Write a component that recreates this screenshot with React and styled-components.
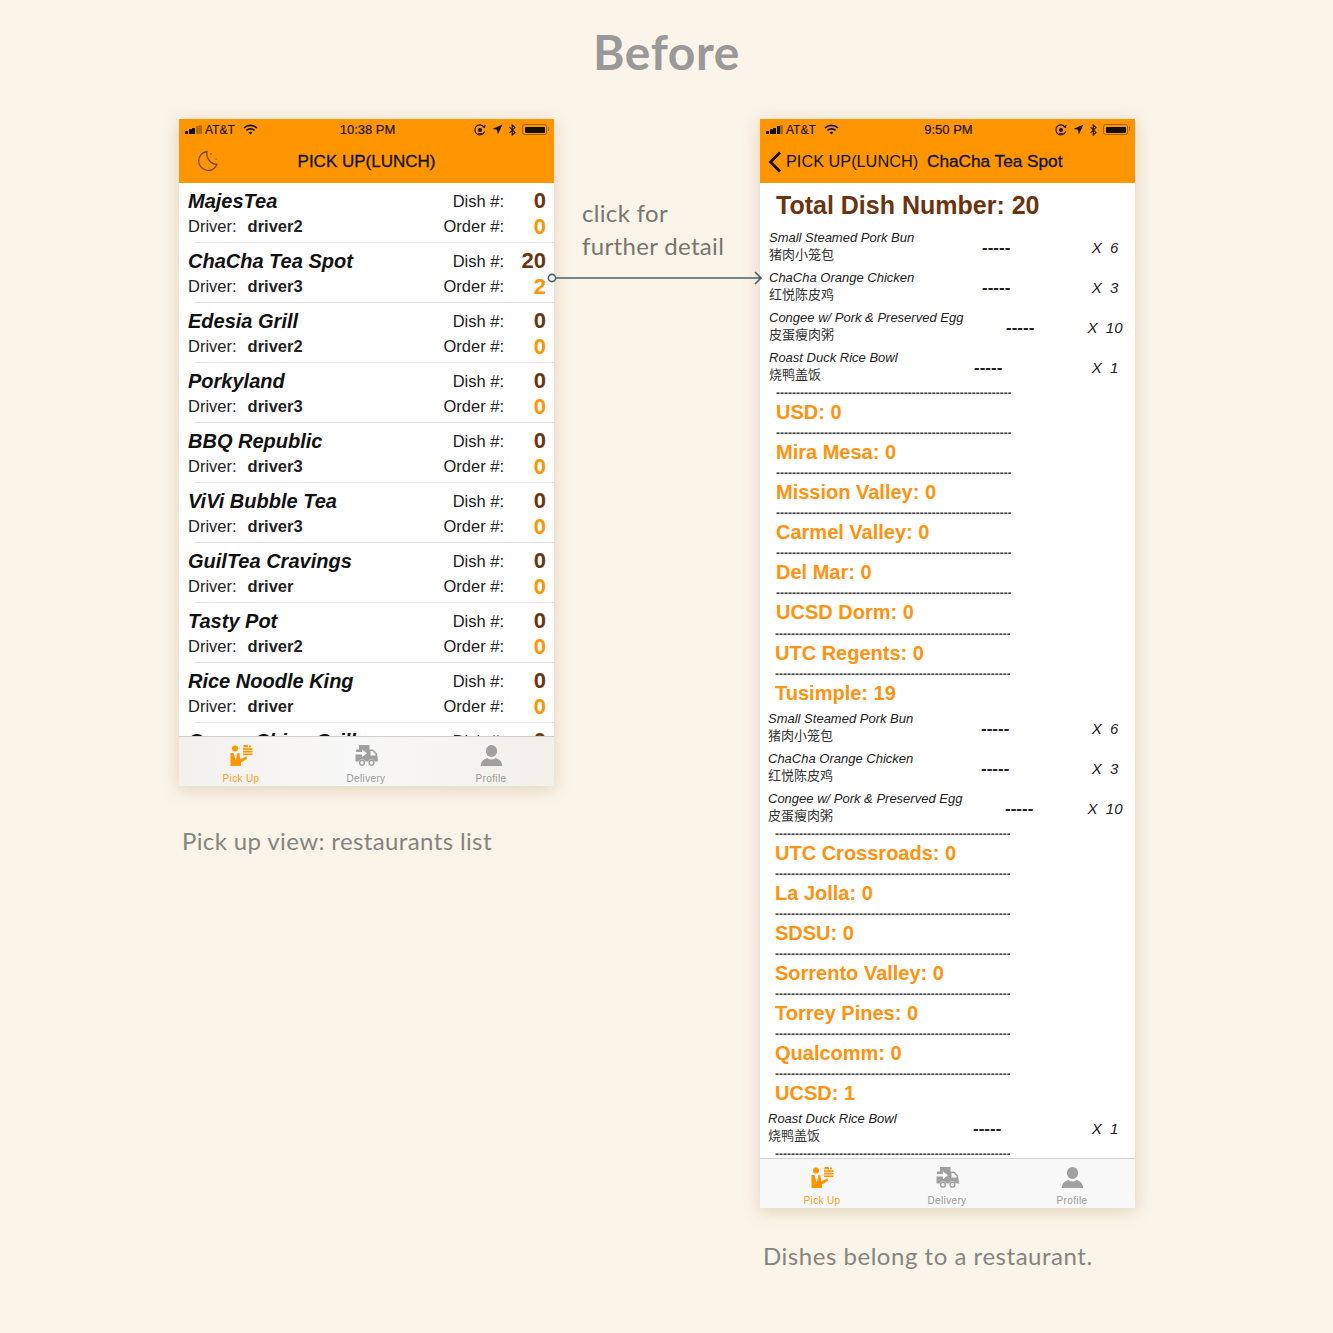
import React from "react"
import styled, { createGlobalStyle } from "styled-components"

const ORANGE = "#ff9500"
const BROWN = "#6b340f"

const Global = createGlobalStyle`
  html, body { margin: 0; padding: 0; background: #fbf4e9; }
  body { font-family: "Liberation Sans", Arial, sans-serif; }
`
const Page = styled.div`
  position: relative;
  width: 1333px;
  height: 1333px;
  overflow: hidden;
  background: #fbf4e9;
`
const Heading = styled.h1`
  margin: 0;
  height: 119px;
  padding-top: 23px;
  box-sizing: border-box;
  text-align: center;
  font: 700 48px/58px Lato, sans-serif;
  color: #999;
  letter-spacing: 0.6px;
`
const Stage = styled.div`
  display: grid;
  grid-template-columns: 375px 206px 375px;
  padding-left: 179px;
`
const Column = styled.div`
  display: flex;
  flex-direction: column;
`
const Phone = styled.div`
  width: 375px;
  height: ${p => p.$height}px;
  display: flex;
  flex-direction: column;
  overflow: hidden;
  background: #fff;
  box-shadow: 0 3px 16px rgba(160, 125, 70, 0.28);
`
const Caption = styled.div`
  margin: ${p => p.$top}px 0 0 3px;
  font: 400 24px/32px Lato, sans-serif;
  color: #85857f;
  letter-spacing: ${p => p.$track}px;
  white-space: nowrap;
`
const Note = styled.div`
  padding: 77px 0 0 28px;
  font: 400 24px/33px Lato, sans-serif;
  color: #77776f;
  letter-spacing: 0.33px;
  white-space: nowrap;
`
const Connector = styled.svg`
  position: absolute;
  left: 546px;
  top: 270px;
`

/* orange header */
const Header = styled.div`
  background: ${ORANGE};
  height: 64px;
  flex: none;
  color: #111;
`
const Status = styled.div`
  position: relative;
  display: flex;
  align-items: center;
  justify-content: space-between;
  height: 20px;
  padding: 1px 6px 0;
  box-sizing: border-box;
  font-size: 12px;
  -webkit-text-stroke: 0.15px #111;
`
const StatusSide = styled.div`
  display: flex;
  align-items: center;
  gap: ${p => p.$gap || 3}px;
`
const WifiSlot = styled.div`
  display: flex;
  margin-left: 5px;
`
const Clock = styled.div`
  position: absolute;
  left: 0;
  right: 0;
  padding-left: 2px;
  text-align: center;
  font-size: 13px;
`
const Signal = styled.div`
  display: flex;
  align-items: flex-end;
  gap: 0.5px;
  height: 9px;
`
const SignalBar = styled.i`
  width: 3px;
  height: ${p => p.$h}px;
  border-radius: 0.5px;
  background: ${p => (p.$on ? "#111" : "rgba(0,0,0,.28)")};
`
const Battery = styled.div`
  position: relative;
  width: 25px;
  height: 11px;
  padding: 1.5px;
  border: 1px solid rgba(0, 0, 0, 0.35);
  border-radius: 2.5px;
  box-sizing: border-box;
  margin-right: 1px;
  &::before {
    content: "";
    display: block;
    height: 100%;
    background: #111;
    border-radius: 1px;
  }
  &::after {
    content: "";
    position: absolute;
    right: -3px;
    top: 2px;
    width: 1.5px;
    height: 4px;
    background: rgba(0, 0, 0, 0.35);
  }
`
const Nav = styled.div`
  display: flex;
  align-items: center;
  justify-content: ${p => (p.$center ? "center" : "flex-start")};
  position: relative;
  height: 44px;
  padding-top: 1px;
  box-sizing: border-box;
  font-size: 17px;
  white-space: nowrap;
`
const NavTitle = styled.div`
  -webkit-text-stroke: 0.3px #111;
  margin-left: ${p => p.$left || 0}px;
  font-size: ${p => p.$size || 17}px;
`
const NavBack = styled.div`
  display: flex;
  margin-left: 6px;
`
const NavBackLabel = styled.span`
  margin-left: -2px;
  font-size: 16.3px;
`
const MoonSlot = styled.svg`
  position: absolute;
  left: 17px;
  top: 10px;
`

/* restaurants list */
const List = styled.div`
  flex: 1;
  min-height: 0;
  overflow: hidden;
`
const Row = styled.div`
  position: relative;
  height: 60px;
  padding: 5px 8px 0 9px;
  box-sizing: border-box;
  &::after {
    content: "";
    position: absolute;
    left: 16px;
    right: 0;
    bottom: 0;
    height: 1px;
    background: #e2e2e2;
  }
`
const Line = styled.div`
  display: flex;
  align-items: center;
  height: ${p => p.$h}px;
`
const Name = styled.div`
  flex: 1;
  font-size: 20px;
  font-weight: 700;
  font-style: italic;
  color: #111;
  white-space: nowrap;
`
const Driver = styled.div`
  flex: 1;
  font-size: 16.5px;
  color: #222;
`
const DriverName = styled.b`
  margin-left: 11px;
  color: #222;
`
const CountLabel = styled.div`
  font-size: 16.5px;
  color: #222;
`
const CountValue = styled.div`
  width: 42px;
  text-align: right;
  font-size: 22px;
  font-weight: 700;
  color: ${p => p.$color};
`

/* tab bar */
const Tabs = styled.div`
  flex: none;
  height: 50px;
  display: grid;
  grid-template-columns: repeat(3, 125px);
  box-sizing: border-box;
  border-top: 1px solid #cfcfcf;
  background: ${p => (p.$soft ? "linear-gradient(90deg, #f3f1ec, #f8f8f8 45%, #f3f0ea)" : "#f8f8f8")};
`
const Tab = styled.div`
  display: flex;
  flex-direction: column;
  align-items: center;
  padding: 8px 1px 0 0;
  font-size: 10px;
  letter-spacing: 0.35px;
  color: ${p => (p.$active ? "#ff9f1a" : "#999")};
`
const TabLabel = styled.div`
  margin-top: 7px;
  line-height: 12px;
`

/* dishes detail */
const Detail = styled.div`
  flex: 1;
  min-height: 0;
  overflow: hidden;
`
const Total = styled.div`
  height: 45px;
  padding-left: 16px;
  font-size: 25px;
  line-height: 45px;
  font-weight: 700;
  color: ${BROWN};
`
const Section = styled.div`
  margin-left: -1px;
`
const DishRow = styled.div`
  display: flex;
  align-items: center;
  height: 40px;
  padding-left: 9px;
`
const DishNames = styled.div`
  width: ${p => p.$w}px;
  flex: none;
  padding-bottom: 6px;
  white-space: nowrap;
`
const DishName = styled.div`
  font-size: 13px;
  line-height: 16px;
  font-style: italic;
  color: #222;
`
const DishCn = styled.div`
  font-family: "Noto Sans CJK SC", sans-serif;
  font-size: 13px;
  line-height: 15px;
  color: #333;
`
const DishDash = styled.div`
  font-size: 17px;
  font-weight: 700;
  line-height: 16px;
  color: #222;
`
const DishQty = styled.div`
  margin-left: auto;
  width: 60px;
  padding-bottom: 2px;
  text-align: center;
  font-size: 15px;
  font-style: italic;
  color: #222;
  white-space: pre;
`
const AreaRow = styled.div`
  height: ${p => p.$h || 40}px;
  padding-left: 16px;
  box-sizing: border-box;
`
const Dashes = styled.div`
  width: 235px;
  height: 10px;
  overflow: hidden;
  white-space: nowrap;
  font-size: 12px;
  font-weight: 700;
  line-height: 10px;
  color: #444;
`
const AreaName = styled.div`
  font-size: 20px;
  line-height: 29px;
  font-weight: 700;
  color: #ff9210;
`

const Moon = () => (
  <MoonSlot width="24" height="24" viewBox="0 0 24 24" fill="none" stroke="#7a4a20" strokeWidth="1.3">
    <path d="M11 2.500A9.500 9.500 0 1 0 21 15.500 11 11 0 0 1 11 2.500Z" />
    <circle cx="15" cy="5" r="0.8" fill="#7a4a20" stroke="none" />
    <circle cx="20" cy="10" r="0.7" fill="#7a4a20" stroke="none" />
  </MoonSlot>
)
const Wifi = () => (
  <svg width="15" height="11" viewBox="0 0 15 11" fill="none" stroke="#111" strokeWidth="1.7">
    <path d="M1 4a9.500 9.500 0 0 1 13 0" />
    <path d="M3.400 6.400a6 6 0 0 1 8.200 0" />
    <path d="M7.500 10.600 5.600 8.600a2.700 2.700 0 0 1 3.800 0Z" fill="#111" stroke="none" />
  </svg>
)
const Lock = () => (
  <svg width="12" height="12" viewBox="0 0 12 12" fill="none" stroke="#111" strokeWidth="1.1">
    <path d="M10.600 7.500A5 5 0 1 1 10 3" />
    <path d="M8.600 2.800 10.600 3.400 11 1" />
    <circle cx="6" cy="6" r="2" fill="#111" stroke="none" />
    <path d="M4 9.500h4" strokeWidth="0.8" />
  </svg>
)
const Locate = () => (
  <svg width="11" height="11" viewBox="0 0 11 11" fill="#111">
    <path d="M10.500.5 0.500 5 5 5.800 5.800 10.500Z" />
  </svg>
)
const Bluetooth = () => (
  <svg width="7" height="12" viewBox="0 0 7 12" fill="none" stroke="#111" strokeWidth="1.1">
    <path d="M.5 3.200 6 8.400 3.200 11V1L6 3.600.5 8.800" />
  </svg>
)
const StatusBar = ({ time, bars }) => (
  <Status>
    <StatusSide>
      <Signal>
        {[3.500, 5, 6.500, 8, 9].map((h, i) => <SignalBar key={i} $h={h} $on={i < bars} />)}
      </Signal>
      <span>AT&amp;T</span>
      <WifiSlot><Wifi /></WifiSlot>
    </StatusSide>
    <Clock>{time}</Clock>
    <StatusSide $gap={6}>
      <Lock />
      <Locate />
      <Bluetooth />
      <Battery />
    </StatusSide>
  </Status>
)

const WaiterIcon = ({ color }) => (
  <svg width="23" height="21" viewBox="0 0 23 21" fill={color}>
    <circle cx="5" cy="3.500" r="3" />
    <path d="M0.500 8h3l2.200 7.500L7.500 8h1.800l.9 6.300 6-2.800 1 2.300L11 17.500V21H0.500Z" />
    <rect x="13.500" y="0" width="4.500" height="2.200" rx="0.5" />
    <rect x="19" y="0.500" width="2" height="1.700" />
    <rect x="13" y="3.200" width="9.500" height="1.700" />
    <rect x="13" y="5.800" width="9.500" height="1.700" />
    <rect x="13" y="8.400" width="9.500" height="1.700" />
  </svg>
)
const TruckIcon = ({ color }) => (
  <svg width="23" height="21" viewBox="0 0 23 21" fill={color}>
    <path d="M4 0h10.500v4.500h3.500l4 4 .8 5.500v2.500H20a3.800 3.800 0 0 0-7 0h-2.500a3.800 3.800 0 0 0-7 0H.5v-7h6.500V12l5-3.700-5-3.800v2.500H1V4.500h3Z" />
    <path d="M15.500 6h2l3 3.200v1.300h-5Z" fill="#f8f8f8" />
    <circle cx="7" cy="17.700" r="2.400" fill="none" stroke={color} strokeWidth="1.400" />
    <circle cx="16.500" cy="17.700" r="2.400" fill="none" stroke={color} strokeWidth="1.400" />
  </svg>
)
const PersonIcon = ({ color }) => (
  <svg width="23" height="21" viewBox="0 0 23 21" fill={color}>
    <ellipse cx="11.500" cy="6" rx="5.600" ry="6" />
    <path d="M.8 21c0-5.500 4.400-7.300 6.500-8.100a7 7 0 0 0 8.400 0c2.100.8 6.500 2.600 6.500 8.100Z" />
  </svg>
)
const TabBar = ({ soft }) => (
  <Tabs $soft={soft}>
    <Tab $active><WaiterIcon color={ORANGE} /><TabLabel>Pick Up</TabLabel></Tab>
    <Tab><TruckIcon color="#a0a0a0" /><TabLabel>Delivery</TabLabel></Tab>
    <Tab><PersonIcon color="#a0a0a0" /><TabLabel>Profile</TabLabel></Tab>
  </Tabs>
)

const restaurants = [
  ["MajesTea", "driver2", 0, 0],
  ["ChaCha Tea Spot", "driver3", 20, 2],
  ["Edesia Grill", "driver2", 0, 0],
  ["Porkyland", "driver3", 0, 0],
  ["BBQ Republic", "driver3", 0, 0],
  ["ViVi Bubble Tea", "driver3", 0, 0],
  ["GuilTea Cravings", "driver", 0, 0],
  ["Tasty Pot", "driver2", 0, 0],
  ["Rice Noodle King", "driver", 0, 0],
  ["Ocean China Grill", "driver", 0, 0],
]

const bun = ["Small Steamed Pork Bun", "猪肉小笼包", 213, "X  6"]
const chicken = ["ChaCha Orange Chicken", "红悦陈皮鸡", 213, "X  3"]
const congee = ["Congee w/ Pork & Preserved Egg", "皮蛋瘦肉粥", 237, "X  10"]
const duck = ["Roast Duck Rice Bowl", "烧鸭盖饭", 205, "X  1"]
const DASH_LINE = "-".repeat(70)

const Dish = ({ item }) => (
  <DishRow>
    <DishNames $w={item[2]}>
      <DishName>{item[0]}</DishName>
      <DishCn>{item[1]}</DishCn>
    </DishNames>
    <DishDash>-----</DishDash>
    <DishQty>{item[3]}</DishQty>
  </DishRow>
)

const Area = ({ name, h }) => (
  <AreaRow $h={h}>
    <Dashes>{DASH_LINE}</Dashes>
    {name && <AreaName>{name}</AreaName>}
  </AreaRow>
)

export default function App() {
  return (
    <Page>
      <Global />
      <Heading>Before</Heading>
      <Stage>
        <Column>
          <Phone $height={667}>
            <Header>
              <StatusBar time="10:38 PM" bars={3} />
              <Nav $center>
                <Moon />
                <NavTitle>PICK UP(LUNCH)</NavTitle>
              </Nav>
            </Header>
            <List>
              {restaurants.map(r => (
                <Row key={r[0]}>
                  <Line $h={26}>
                    <Name>{r[0]}</Name>
                    <CountLabel>Dish #:</CountLabel>
                    <CountValue $color={BROWN}>{r[2]}</CountValue>
                  </Line>
                  <Line $h={25}>
                    <Driver>Driver:<DriverName>{r[1]}</DriverName></Driver>
                    <CountLabel>Order #:</CountLabel>
                    <CountValue $color={ORANGE}>{r[3]}</CountValue>
                  </Line>
                </Row>
              ))}
            </List>
            <TabBar soft />
          </Phone>
          <Caption $top={39} $track={0.38}>Pick up view: restaurants list</Caption>
        </Column>
        <Note>click for<br />further detail</Note>
        <Column>
          <Phone $height={1089}>
            <Header>
              <StatusBar time="9:50 PM" bars={4} />
              <Nav>
                <NavBack>
                  <svg width="22" height="24" viewBox="0 0 22 24" fill="none" stroke="#111" strokeWidth="2.800">
                    <path d="M14 2.500 4.500 12l9.500 9.500" />
                  </svg>
                </NavBack>
                <NavBackLabel>PICK UP(LUNCH)</NavBackLabel>
                <NavTitle $left={9} $size={17.2}>ChaCha Tea Spot</NavTitle>
              </Nav>
            </Header>
            <Detail>
              <Total>Total Dish Number: 20</Total>
              {[bun, chicken, congee, duck].map(d => <Dish key={d[0]} item={d} />)}
              {["USD: 0", "Mira Mesa: 0", "Mission Valley: 0", "Carmel Valley: 0", "Del Mar: 0"].map(n => (
                <Area key={n} name={n} />
              ))}
              <Area name="UCSD Dorm: 0" h={41} />
              <Section>
                <Area name="UTC Regents: 0" />
                <Area name="Tusimple: 19" />
                {[bun, chicken, congee].map(d => <Dish key={d[0]} item={d} />)}
                {["UTC Crossroads: 0", "La Jolla: 0", "SDSU: 0", "Sorrento Valley: 0", "Torrey Pines: 0", "Qualcomm: 0", "UCSD: 1"].map(n => (
                  <Area key={n} name={n} />
                ))}
                <Dish item={duck} />
                <Area />
              </Section>
            </Detail>
            <TabBar />
          </Phone>
          <Caption $top={32} $track={0.53}>Dishes belong to a restaurant.</Caption>
        </Column>
      </Stage>
      <Connector width="222" height="18" viewBox="0 0 222 18" fill="none" stroke="#47606e" strokeWidth="1.600">
        <circle cx="6" cy="8" r="3.600" fill="#fff" />
        <path d="M10 8h205M209 2l6 6-6 6" />
      </Connector>
    </Page>
  )
}
